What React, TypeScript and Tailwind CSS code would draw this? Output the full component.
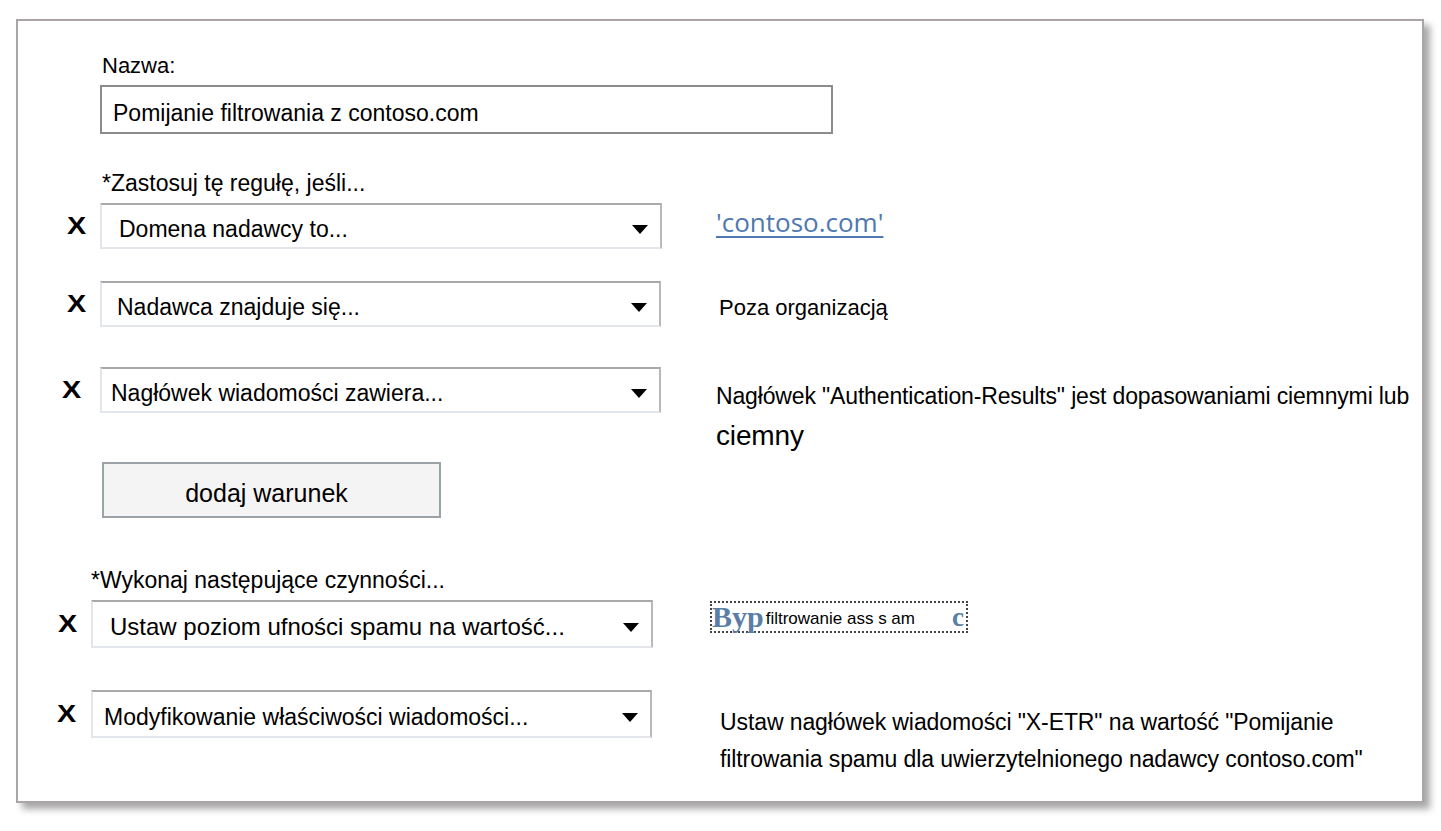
import React from 'react';

// Small black caret used on the fake select boxes
const Caret = () => (
  <svg width="16" height="9" viewBox="0 0 16 9" className="shrink-0">
    <path d="M0 0 L16 0 L8 9 Z" fill="#000" />
  </svg>
);

type RowProps = {
  cellWidth: string;
  selectWidth: string;
  selectHeight: string;
  textPad: string;
  text: string;
  textSize?: string;
  mt: string;
  children?: React.ReactNode;
};

// One "X  [select ▾]   value" line; the value may spill below the row
const RuleRow: React.FC<RowProps> = ({ cellWidth, selectWidth, selectHeight, textPad, text, textSize, mt, children }) => {
  return (
    <div className={`flex items-start shrink-0 ${selectHeight} ${mt}`}>
      <div className={`${cellWidth} ${selectHeight} flex items-center`}>
        <span className="font-bold text-[23px] leading-none scale-x-[1.25] origin-left">X</span>
      </div>
      <div
        className={`${selectWidth} ${selectHeight} shrink-0 flex items-center justify-between border-2 border-t-[#a9a9ab] border-r-[#b9b9bb] border-b-[#e2e5ea] border-l-[#e2e5ea] bg-white ${textPad} pr-[12px] pt-[6px]`}
      >
        <span className={`${textSize ?? 'text-[23px]'} whitespace-nowrap`}>{text}</span>
        <Caret />
      </div>
      {children}
    </div>
  );
};

export default function App() {
  return (
    <div className="w-[1441px] h-[831px] bg-white pl-4 pt-[19px] font-['Liberation_Sans',Arial,sans-serif] text-black">
      <div className="w-[1408px] h-[784px] border-2 border-[#aaa6a8] shadow-[6px_6px_7px_rgba(0,0,0,0.35)] flex flex-col">
        {/* Name */}
        <div className="shrink-0 ml-[84px] mt-[32px] h-[26px] leading-[26px] text-[22px]">Nazwa:</div>
        <div className="shrink-0 ml-[82px] mt-[6px] w-[733px] h-[49px] border-2 border-[#8c8c8c] pl-[11px] pt-[8px] flex items-center text-[23px]">
          Pomijanie filtrowania z contoso.com
        </div>

        {/* Conditions */}
        <div className="shrink-0 ml-[84px] mt-[36px] h-[26px] leading-[26px] text-[23px]">*Zastosuj tę regułę, jeśli...</div>

        <RuleRow
          cellWidth="w-[82px] pl-[49px]"
          selectWidth="w-[562px]"
          selectHeight="h-[46px]"
          textPad="pl-[17px]"
          text="Domena nadawcy to..."
          mt="mt-[7px]"
        >
          <div className="ml-[54px] mt-[2px] leading-[34px] text-[26px] text-[#4f78b0] underline underline-offset-4 font-['Open_Sans',sans-serif]">
            'contoso.com'
          </div>
        </RuleRow>

        <RuleRow
          cellWidth="w-[82px] pl-[49px]"
          selectWidth="w-[561px]"
          selectHeight="h-[46px]"
          textPad="pl-[15px]"
          text="Nadawca znajduje się..."
          mt="mt-[32px]"
        >
          <div className="ml-[58px] mt-[14px] leading-[26px] text-[22px]">Poza organizacją</div>
        </RuleRow>

        <RuleRow
          cellWidth="w-[82px] pl-[44px]"
          selectWidth="w-[561px]"
          selectHeight="h-[46px]"
          textPad="pl-[9px]"
          text="Nagłówek wiadomości zawiera..."
          mt="mt-[40px]"
        >
          <div className="ml-[55px] mt-[10px] tracking-[-0.15px]">
            <div className="leading-[39px] text-[23px] whitespace-nowrap">
              Nagłówek "Authentication-Results" jest dopasowaniami ciemnymi lub
            </div>
            <div className="leading-[39px] text-[28px]">ciemny</div>
          </div>
        </RuleRow>

        <button className="shrink-0 ml-[84px] mt-[49px] w-[339px] h-[56px] border-2 border-[#9ca3a6] bg-[#f4f4f4] text-[25px] text-black pr-[10px] pt-[8px]">
          dodaj warunek
        </button>

        {/* Actions */}
        <div className="shrink-0 ml-[73px] mt-[49px] h-[26px] leading-[26px] text-[23px]">*Wykonaj następujące czynności...</div>

        <RuleRow
          cellWidth="w-[73px] pl-[40px]"
          selectWidth="w-[562px]"
          selectHeight="h-[48px]"
          textPad="pl-[17px]"
          text="Ustaw poziom ufności spamu na wartość..."
          textSize="text-[24px]"
          mt="mt-[7px]"
        >
          <div className="ml-[57px] mt-[1px] w-[258px] h-[32px] border-2 border-dotted border-[#444] flex items-end pb-[1px] pr-[2px]">
            <span className="font-['Liberation_Serif',serif] font-bold text-[30px] text-[#5a7ea6] leading-[26px]">Byp</span>
            <span className="text-[17px] leading-[22px] ml-[2px]">filtrowanie ass s am</span>
            <span className="ml-auto font-['Liberation_Serif',serif] font-bold text-[27px] text-[#5a7ea6] leading-[26px]">c</span>
          </div>
        </RuleRow>

        <RuleRow
          cellWidth="w-[73px] pl-[39px]"
          selectWidth="w-[561px]"
          selectHeight="h-[48px]"
          textPad="pl-[11px]"
          text="Modyfikowanie właściwości wiadomości..."
          mt="mt-[42px]"
        >
          <div className="ml-[68px] mt-[14px] text-[23px] leading-[37px] tracking-[-0.1px]">
            <div className="whitespace-nowrap">Ustaw nagłówek wiadomości "X-ETR" na wartość "Pomijanie</div>
            <div className="whitespace-nowrap">filtrowania spamu dla uwierzytelnionego nadawcy contoso.com"</div>
          </div>
        </RuleRow>
      </div>
    </div>
  );
}
